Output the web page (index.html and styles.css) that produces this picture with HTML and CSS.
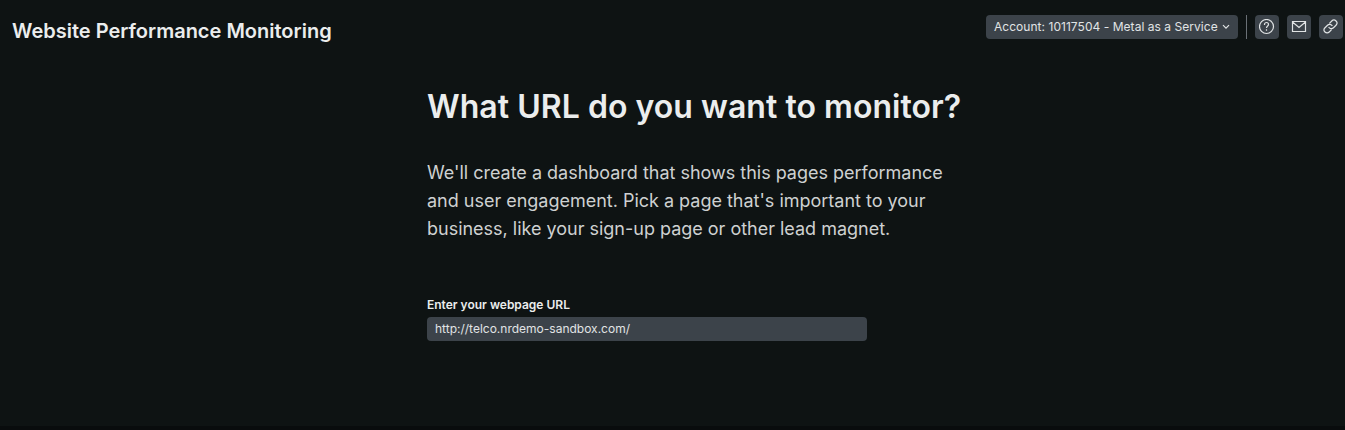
FILE: index.html
```html
<!DOCTYPE html>
<html lang="en">
<head>
<meta charset="utf-8">
<title>Website Performance Monitoring</title>
<link rel="stylesheet" href="styles.css">
</head>
<body>
<header class="header">
  <h1 class="title">Website Performance Monitoring</h1>
  <div class="actions">
    <button class="account"><span>Account: 10117504 - Metal as a Service</span>
      <svg width="8" height="6" viewBox="0 0 8 6"><path d="M1 1.200 4 4.200 7 1.200"/></svg></button>
    <span class="divider"></span>
    <button class="icon-button" aria-label="Help"><svg width="16" height="16" viewBox="0 0 16 16"><circle cx="7.500" cy="7.500" r="7"/><path d="M5.500 6V5.500a2 2 0 0 1 4 0c0 1.500-2 1.500-2 3.500M7.500 10.300v1.400"/></svg></button>
    <button class="icon-button" aria-label="Mail"><svg width="16" height="16" viewBox="0 0 16 16"><path d="M1.500 2.500h13v10h-13zM1.500 3l6.500 5.500 6.500-5.500"/></svg></button>
    <button class="icon-button" aria-label="Copy link"><svg width="16" height="16" viewBox="0 0 16 16"><g transform="rotate(-45 7.500 7.500)"><path d="M6 10.500H2.700a3 3 0 0 1 0-6h3.600a3 3 0 0 1 2.800 4M9 4.500h3.300a3 3 0 0 1 0 6H8.700a3 3 0 0 1-2.800-4"/></g></svg></button>
  </div>
</header>
<main class="content">
  <h2 class="heading">What URL do you want to monitor?</h2>
  <p class="description">We'll create a dashboard that shows this pages performance<br>and user engagement. Pick a page that's important to your<br>business, like your sign-up page or other lead magnet.</p>
  <label class="label" for="url">Enter your webpage URL</label>
  <input class="url-input" id="url" type="text" value="http://telco.nrdemo-sandbox.com/">
</main>
<footer class="edge"></footer>
</body>
</html>
```
FILE: styles.css
```css
* { box-sizing: border-box; }
body { margin: 0; height: 430px; overflow: hidden; display: flex; flex-direction: column; background: #0e1313; color: #ebeded; font-family: Inter, sans-serif; }
.header { display: flex; justify-content: space-between; height: 70px; padding: 15px 2px 0 12px; }
.title { margin: 0; font-size: 20px; line-height: 32px; font-weight: 600; }
.actions { display: flex; gap: 8px; height: 24px; }
.account, .icon-button { display: flex; align-items: center; border: 0; border-radius: 4px; background: #3c434a; color: #e1e4e5; font-family: inherit; }
.account { width: 252px; padding: 0 8px 1px; justify-content: space-between; font-size: 12px; letter-spacing: 0.04px; white-space: nowrap; }
.icon-button { width: 24px; padding: 0; justify-content: center; }
svg { fill: none; stroke: currentColor; stroke-width: 1.2; flex: none; }
.divider { width: 1px; background: #6a7076; }
.content { display: flex; flex-direction: column; align-items: flex-start; flex: 1; padding: 17px 0 0 427px; }
.heading { margin: 0; font-size: 32px; line-height: 40px; font-weight: 600; letter-spacing: 0.04px; }
.description { margin: 32px 0 0; font-size: 18px; line-height: 28px; color: #ced1d1; letter-spacing: -0.01px; }
.label { margin-top: 54px; font-size: 12px; line-height: 16px; font-weight: 600; }
.url-input { margin-top: 4px; width: 440px; height: 24px; padding: 0 8px 2px; border: 0; border-radius: 4px; background: #3c434a; color: #e1e4e5; font: 12px Inter, sans-serif; }
.edge { height: 4px; background: #090c0d; }
```
